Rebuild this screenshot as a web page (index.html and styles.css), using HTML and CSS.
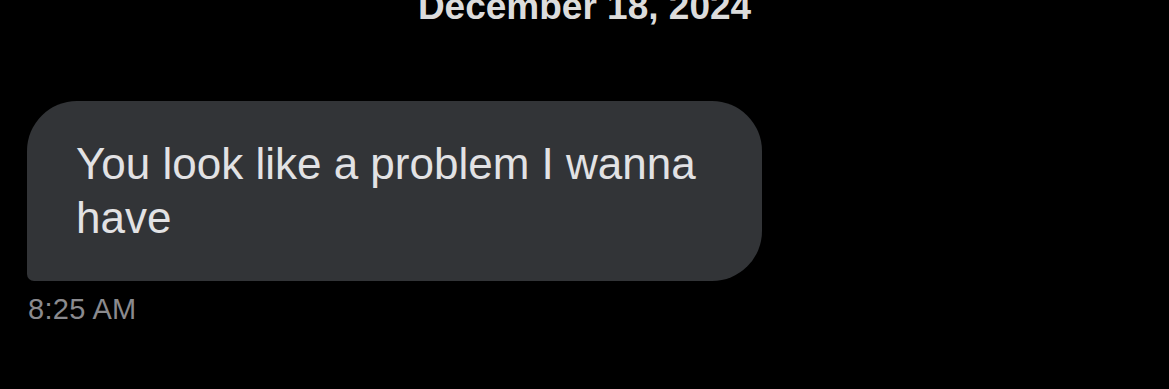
FILE: index.html
```html
<!DOCTYPE html>
<html>
<head>
<meta charset="utf-8">
<link rel="stylesheet" href="styles.css">
</head>
<body>
<div class="thread">
  <div class="date">December 18, 2024</div>
  <div class="msg">
    <div class="bubble">You look like a problem I wanna have</div>
    <div class="time">8:25 AM</div>
  </div>
</div>
</body>
</html>
```
FILE: styles.css
```css
html, body {
  margin: 0;
  padding: 0;
  background: #000;
  width: 1169px;
  height: 389px;
  overflow: hidden;
}
.thread {
  display: flex;
  flex-direction: column;
  font-family: "Liberation Sans", Arial, sans-serif;
}
.date {
  text-align: center;
  font-weight: bold;
  font-size: 37px;
  line-height: 37px;
  margin-top: -12px;
  color: #dcdcdc;
}
.msg {
  display: flex;
  flex-direction: column;
  align-items: flex-start;
  padding-left: 27px;
  margin-top: 76px;
}
.bubble {
  box-sizing: border-box;
  width: 735px;
  height: 180px;
  padding: 36px 30px 0 49px;
  background: #323437;
  color: #e2e2e4;
  font-size: 44px;
  line-height: 54px;
  border-radius: 50px 50px 50px 7px;
}
.time {
  margin-top: 12px;
  padding-left: 1px;
  font-size: 29px;
  line-height: 32px;
  letter-spacing: 0.3px;
  color: #8a8a8e;
}
```
